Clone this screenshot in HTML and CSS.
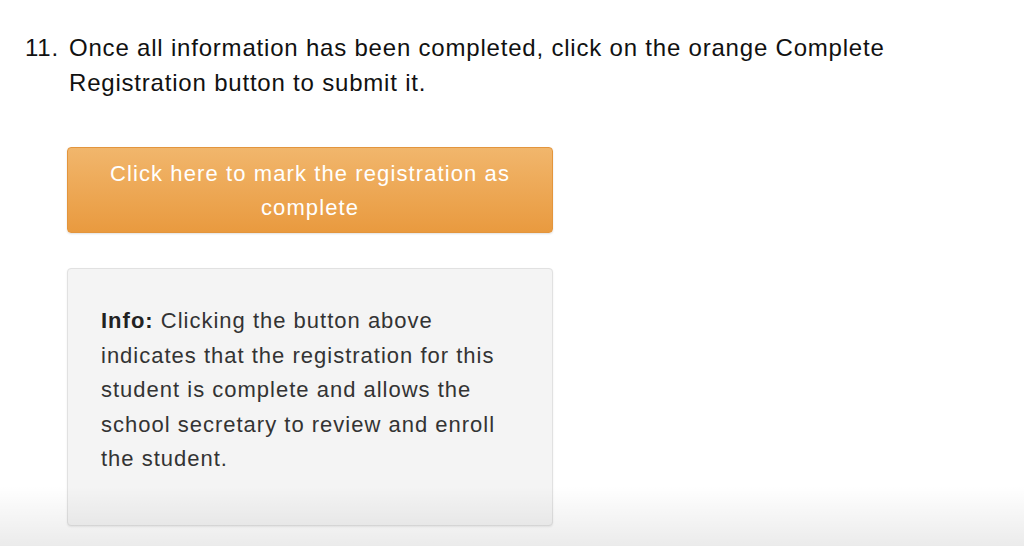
FILE: index.html
```html
<!DOCTYPE html>
<html lang="en">
<head>
<meta charset="UTF-8">
<meta name="viewport" content="width=device-width, initial-scale=1.0">
<title>Complete Registration</title>
<link rel="stylesheet" href="styles.css">
</head>
<body>
    <div class="step">
        <span class="step-num">11.</span>
        <div class="step-body">
            <p class="step-text">Once all information has been completed, click on the orange Complete Registration button to submit it.</p>
            <div class="panel">
                <a href="#" class="btn-complete">Click here to mark the registration as complete</a>
                <div class="info">
                    <p><b>Info:</b> Clicking the button above indicates that the registration for this student is complete and allows the school secretary to review and enroll the student.</p>
                </div>
            </div>
        </div>
    </div>
    <div class="fade"></div>
</body>
</html>
```

FILE: styles.css
```css
html, body {
    margin: 0;
    padding: 0;
    background: #fff;
}
body {
    height: 546px;
    overflow: hidden;
    font-family: "Liberation Sans", Arial, sans-serif;
    color: #111;
}
.step {
    display: flex;
    padding: 30px 0 0 25px;
    font-size: 24px;
    line-height: 35px;
    letter-spacing: 0.8px;
}
.step-num {
    width: 44px;
}
.step-text {
    margin: 0;
    width: 880px;
}
.panel {
    width: 486px;
    margin: 47px 0 0 -2px;
}
.btn-complete {
    display: block;
    box-sizing: border-box;
    height: 86px;
    padding: 9px 38px 0;
    border: 1px solid #e3953d;
    border-radius: 4px;
    background: linear-gradient(#f1b66c, #e99a3f);
    color: #fff;
    font-size: 22px;
    line-height: 34px;
    letter-spacing: 1.1px;
    text-align: center;
    text-decoration: none;
    box-shadow: 0 1px 2px rgba(0, 0, 0, .12);
}
.info {
    box-sizing: border-box;
    height: 258px;
    margin-top: 35px;
    padding: 35px 40px 0 33px;
    background: #f4f4f4;
    border: 1px solid #e1e1e1;
    border-radius: 4px;
    box-shadow: 0 1px 2px rgba(0, 0, 0, .08);
    color: #333;
    font-size: 22px;
    line-height: 34.5px;
    letter-spacing: 1px;
}
.info p {
    margin: 0;
    width: 405px;
}
.info b {
    color: #222;
}
.fade {
    position: absolute;
    left: 0;
    right: 0;
    bottom: 0;
    height: 60px;
    background: linear-gradient(rgba(0, 0, 0, 0), rgba(0, 0, 0, .08));
    pointer-events: none;
}
```
